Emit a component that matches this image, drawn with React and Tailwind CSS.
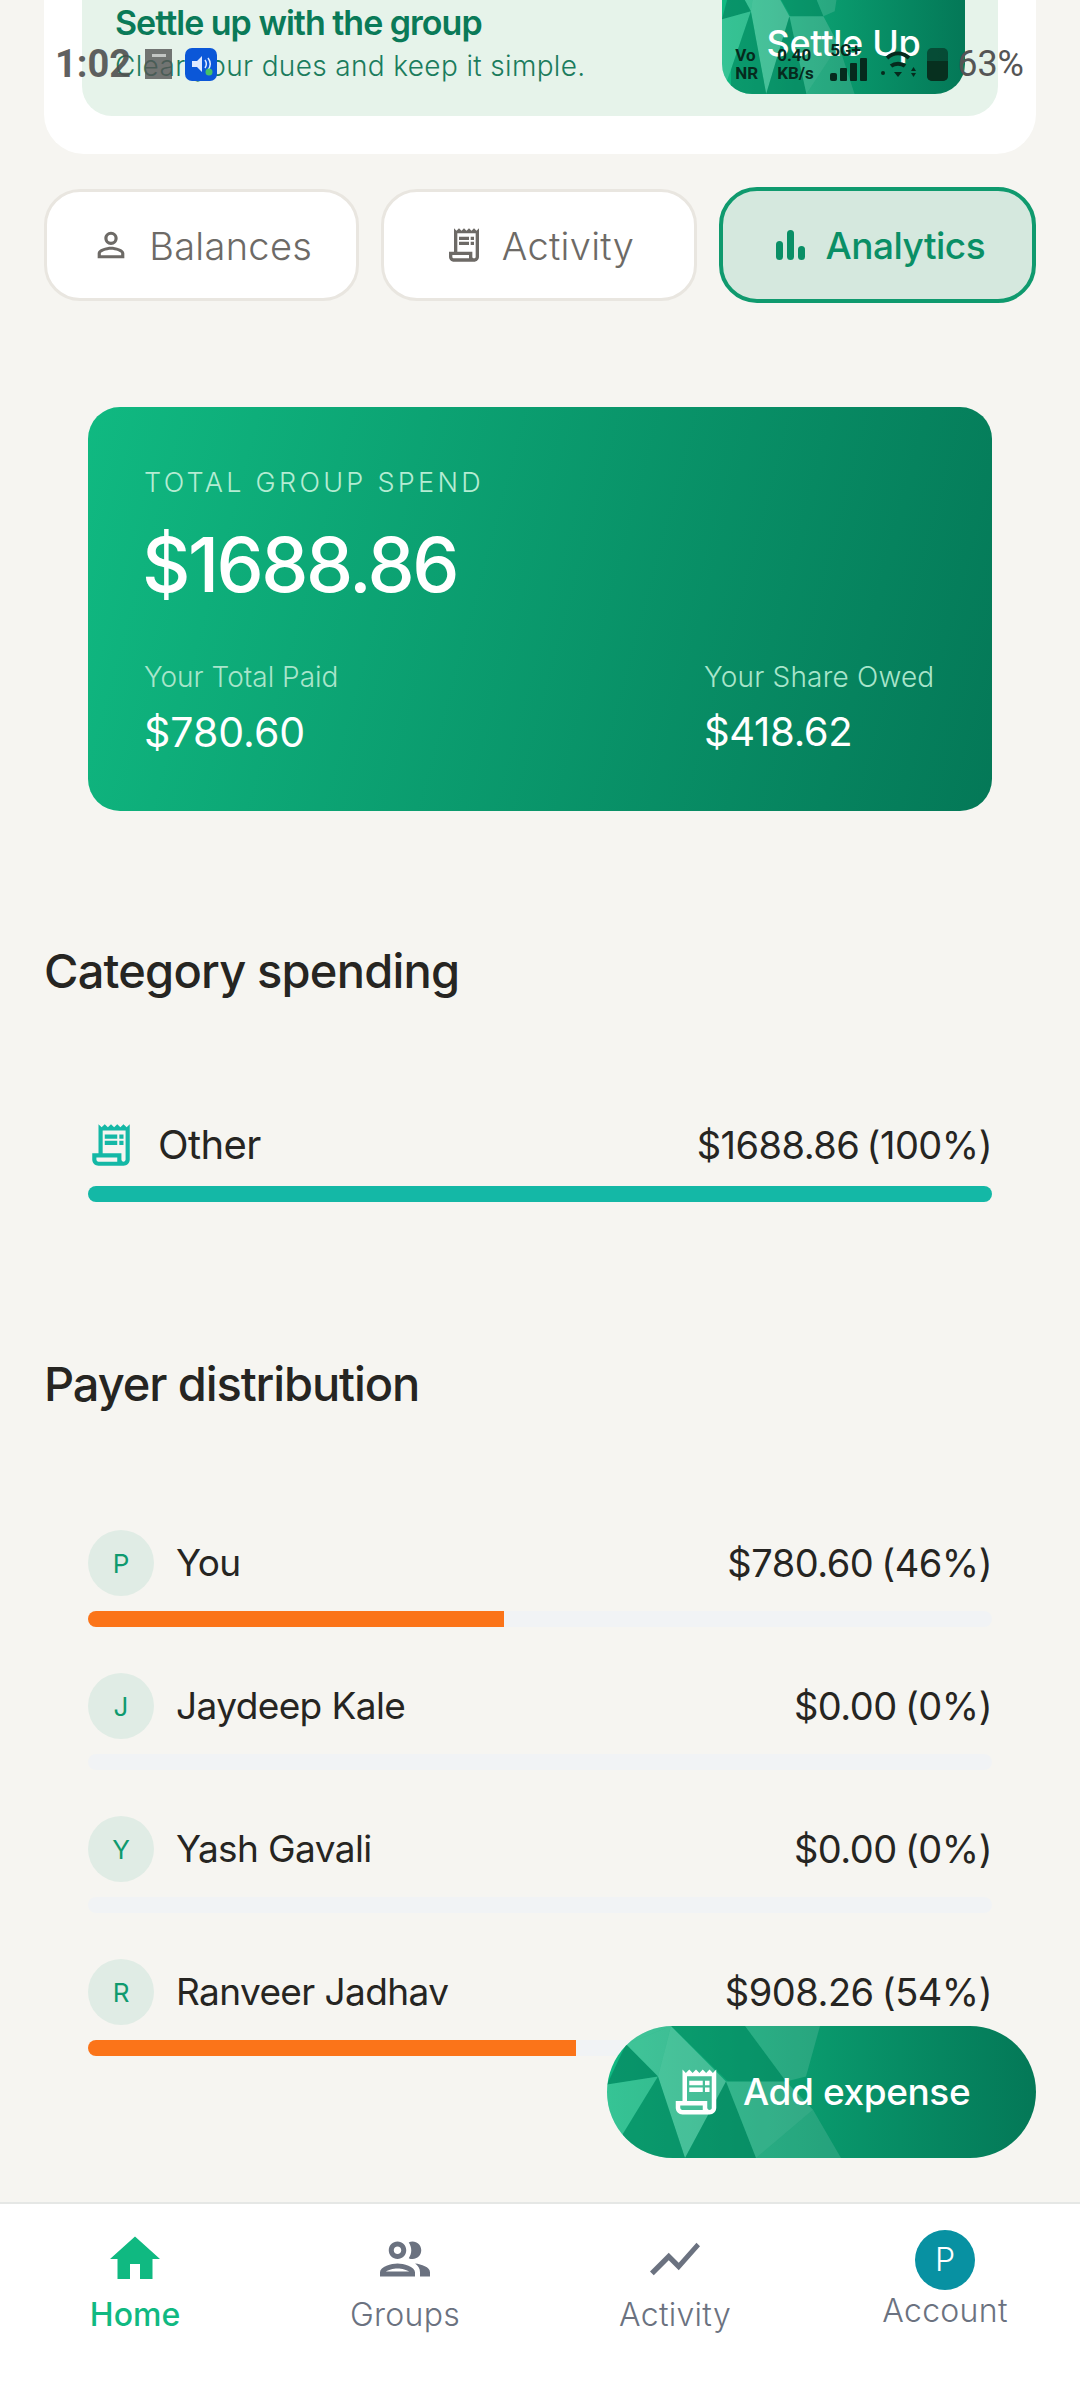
import { MdHome, MdOutlineGroup, MdOutlineReceiptLong, MdPersonOutline, MdShowChart } from 'react-icons/md';

const payers = [
    { initial: 'P', name: 'You', amount: '$780.60 (46%)', percent: 46 },
    { initial: 'J', name: 'Jaydeep Kale', amount: '$0.00 (0%)', percent: 0 },
    { initial: 'Y', name: 'Yash Gavali', amount: '$0.00 (0%)', percent: 0 },
    { initial: 'R', name: 'Ranveer Jadhav', amount: '$908.26 (54%)', percent: 54 },
];

function Facets() {
    return (
        <svg className="absolute inset-0 w-full h-full" viewBox="0 0 429 131" preserveAspectRatio="none">
            <polygon points="19,18 64,0 0,0" fill="#ffffff" opacity="0.2" />
            <polygon points="19,18 64,0 51,50" fill="#ffffff" opacity="0.2" />
            <polygon points="64,0 51,50 78,131 119,55" fill="#ffffff" opacity="0.24" />
            <polygon points="0,58 19,18 51,50" fill="#047857" opacity="0.55" />
            <polygon points="0,58 51,50 16,107 0,131" fill="#ffffff" opacity="0.16" />
            <polygon points="16,107 51,50 78,131 16,131" fill="#047857" opacity="0.45" />
            <polygon points="78,131 119,55 149,131" fill="#047857" opacity="0.45" />
            <polygon points="64,0 138,0 179,55 121,55" fill="#047857" opacity="0.35" />
            <polygon points="119,55 179,55 206,83 149,131" fill="#ffffff" opacity="0.17" />
            <polygon points="149,131 206,83 234,131" fill="#ffffff" opacity="0.12" />
            <polygon points="138,0 213,0 199,50 179,55" fill="#ffffff" opacity="0.13" />
        </svg>
    );
}

function StatusBar() {
    return (
        <div className="absolute top-[44px] left-[55px] w-[969px] h-[40px] flex items-center justify-between text-[#4f4f4f] font-['Roboto',sans-serif]">
            <div className="flex items-center">
                <span className="text-[38px] font-bold leading-none w-[90px] opacity-90">1:02</span>
                <span className="w-[27px] h-[30px] bg-[#555555] opacity-80 flex justify-center pt-[5px]">
                    <span className="w-[14px] h-[3px] bg-[#bbbbbb]" />
                </span>
                <span className="ml-[13px] w-[32px] h-[33px] rounded-[7px] bg-[#0b57d8] flex items-center justify-center">
                    <svg width="24" height="24" viewBox="0 0 24 24" fill="none">
                        <polygon points="3,9 8,9 13,4 13,20 8,15 3,15" fill="#dfe9ff" />
                        <path d="M16 8c2 3 2 5 0 8M19 6c3 4 3 8 0 12" stroke="#dfe9ff" strokeWidth="1.5" />
                        <circle cx="20" cy="20" r="3.5" fill="#46c267" />
                    </svg>
                </span>
            </div>
            <div className="flex items-center text-[#062a1d]">
                <span className="flex flex-col text-[17px] font-bold leading-[18px] w-[42px]">
                    <span>Vo</span>
                    <span>NR</span>
                </span>
                <span className="flex flex-col text-[17px] font-bold leading-[18px] w-[53px]">
                    <span>0.40</span>
                    <span>KB/s</span>
                </span>
                <span className="relative w-[49px] h-[34px] flex items-end gap-[3px]">
                    <span className="absolute -top-[5px] left-0 text-[17px] font-bold leading-none">5G+</span>
                    <span className="w-[7px] h-[8px] rounded-[2px] bg-[#062a1d]" />
                    <span className="w-[7px] h-[13px] rounded-[1px] bg-[#062a1d]" />
                    <span className="w-[7px] h-[18px] rounded-[1px] bg-[#062a1d]" />
                    <span className="w-[7px] h-[23px] rounded-[1px] bg-[#062a1d]" />
                </span>
                <svg width="38" height="30" viewBox="0 0 38 30" fill="none" stroke="#062a1d" strokeWidth="4" className="mr-[10px]">
                    <path d="M8 9c7-6 15-6 22 0" />
                    <path d="M12 17c4-3 10-3 14 0" />
                    <polygon points="15,23 23,23 19,28" fill="#062a1d" stroke="none" />
                    <polygon points="32,22 37,22 34.5,18" fill="#062a1d" stroke="none" />
                    <polygon points="32,24 37,24 34.5,28" fill="#062a1d" stroke="none" />
                    <circle cx="4" cy="24" r="2" fill="#062a1d" stroke="none" />
                </svg>
                <span className="w-[21px] h-[33px] rounded-[5px] bg-[#062a1d]/60 flex items-end overflow-hidden">
                    <span className="w-full h-[20px] bg-[#07301f]" />
                </span>
                <span className="ml-[9px] text-[36px] leading-none text-[#555555]">63%</span>
            </div>
        </div>
    );
}

function Tab({ icon, label, active }) {
    return (
        <div className={active
            ? 'flex-1 h-[116px] -my-[2px] rounded-[38px] border-[4px] border-[#0f9a6e] bg-[#d5e8de] flex items-center justify-center gap-[16px] text-[#0a8f66]'
            : 'flex-1 h-[112px] rounded-[36px] border-[3px] border-[#e9e6e0] bg-white flex items-center justify-center gap-[18px] text-[#6d6a66]'}
        >
            {icon}
            <span className={active ? 'mt-[2px] text-[37px] font-medium tracking-[-0.5px]' : 'mt-[2px] text-[38px] font-light tracking-[0.3px]'}>{label}</span>
        </div>
    );
}

function PayerRow({ payer }) {
    return (
        <div className="h-[143px]">
            <div className="flex items-center h-[66px]">
                <div className="w-[66px] h-[66px] rounded-full bg-[#e0ece5] flex items-center justify-center text-[26px] text-[#0f9a6e]">
                    {payer.initial}
                </div>
                <span className="ml-[22px] flex-1 text-[37px] tracking-[-0.6px] text-[#262522]">{payer.name}</span>
                <span className="text-[38px] tracking-[-0.5px] [word-spacing:-2px] text-[#262522]">{payer.amount}</span>
            </div>
            <div className="mt-[15px] h-[16px] rounded-full bg-[#f1f3f5] overflow-hidden">
                <div className="h-full bg-[#fb7419]" style={{ width: `${payer.percent}%` }} />
            </div>
        </div>
    );
}

function NavItem({ icon, label, active }) {
    return (
        <div className={active ? 'flex-1 flex flex-col items-center text-[#10b981]' : 'flex-1 flex flex-col items-center text-[#6b7280]'}>
            <div className="h-[58px] flex items-center justify-center">{icon}</div>
            <span className={active ? 'mt-[9px] text-[32px] font-medium leading-[36px]' : 'mt-[9px] text-[32px] font-light tracking-[0.3px] leading-[36px]'}>{label}</span>
        </div>
    );
}

export default function App() {
    return (
        <div className="relative w-[1080px] h-[2408px] overflow-hidden flex flex-col bg-[#f6f5f1] font-['Inter',sans-serif]">
            <main className="flex-1 px-[44px]">
                <div className="-mt-[40px] h-[194px] rounded-[40px] bg-white px-[38px]">
                    <div className="h-[156px] rounded-[30px] bg-[#e6f3ea] pl-[33px] pr-[33px] flex justify-between">
                        <div className="pt-[40px]">
                            <div className="text-[34px] leading-[46px] font-semibold tracking-[-1px] text-[#0a7a58]">Settle up with the group</div>
                            <div className="mt-[-2px] text-[28px] leading-[44px] font-light tracking-[0.35px] text-[#1b7c5d]">Clear your dues and keep it simple.</div>
                        </div>
                        <div className="relative w-[243px] h-[134px] rounded-[30px] overflow-hidden bg-gradient-to-r from-[#10b981] to-[#047857] flex items-center justify-center">
                            <Facets />
                            <span className="relative mt-[32px] text-[36px] font-medium tracking-[-0.3px] text-white">Settle Up</span>
                        </div>
                    </div>
                </div>

                <div className="mt-[35px] flex gap-[22px]">
                    <Tab icon={<MdPersonOutline size={40} />} label="Balances" />
                    <Tab icon={<MdOutlineReceiptLong size={40} />} label="Activity" />
                    <Tab
                        active
                        label="Analytics"
                        icon={
                            <svg width="40" height="40" viewBox="0 0 40 40" fill="currentColor">
                                <rect x="6" y="16" width="7" height="19" rx="3.5" />
                                <rect x="17" y="5" width="7" height="30" rx="3.5" />
                                <rect x="28" y="21" width="7" height="14" rx="3.5" />
                            </svg>
                        }
                    />
                </div>

                <section className="mt-[106px] mx-[44px] h-[404px] rounded-[32px] bg-[linear-gradient(105deg,#10b981,#047857)] px-[56px] pt-[56px] text-white">
                    <div className="text-[27px] leading-[40px] font-light tracking-[3.3px] text-[#b5ecd3]">TOTAL GROUP SPEND</div>
                    <div className="mt-[16px] -ml-[2px] text-[75px] leading-[92px] font-medium tracking-[-2.5px]">$1688.86</div>
                    <div className="mt-[46px] flex justify-between">
                        <div>
                            <div className="text-[28px] leading-[40px] font-light text-[#a9e5cb]">Your Total Paid</div>
                            <div className="mt-[11px] text-[41px] leading-[48px] font-normal">$780.60</div>
                        </div>
                        <div className="w-[232px]">
                            <div className="text-[28px] leading-[40px] font-light tracking-[0.2px] text-[#a9e5cb] whitespace-nowrap">Your Share Owed</div>
                            <div className="mt-[11px] text-[40px] leading-[48px] font-normal tracking-[-0.3px]">$418.62</div>
                        </div>
                    </div>
                </section>

                <h2 className="mt-[132px] text-[47px] leading-[56px] font-medium tracking-[-0.8px] text-[#262522]">Category spending</h2>

                <div className="mt-[118px] mx-[44px]">
                    <div className="flex items-center h-[56px]">
                        <MdOutlineReceiptLong size={50} className="text-[#14b8a6] -ml-[2px]" />
                        <span className="ml-[22px] flex-1 text-[40px] tracking-[-0.6px] text-[#262522]">Other</span>
                        <span className="text-[38px] tracking-[-0.5px] [word-spacing:-3px] text-[#262522]">$1688.86 (100%)</span>
                    </div>
                    <div className="mt-[13px] h-[16px] rounded-full bg-[#14b8a6]" />
                </div>

                <h2 className="mt-[154px] text-[47px] leading-[56px] font-medium tracking-[-1.1px] text-[#262522]">Payer distribution</h2>

                <div className="mt-[118px] mx-[44px]">
                    {payers.map((payer) => <PayerRow key={payer.name} payer={payer} />)}
                </div>
            </main>

            <nav className="h-[206px] shrink-0 border-t-2 border-[#e5e7e5] bg-white flex pt-[26px]">
                <NavItem active icon={<MdHome size={60} />} label="Home" />
                <NavItem icon={<MdOutlineGroup size={60} />} label="Groups" />
                <NavItem icon={<MdShowChart size={60} />} label="Activity" />
                <div className="flex-1 flex flex-col items-center text-[#6b7280]">
                    <div className="w-[60px] h-[60px] rounded-full bg-[#0891a2] flex items-center justify-center text-[32px] font-light text-white">P</div>
                    <span className="mt-[3px] text-[32px] font-light tracking-[0.3px] leading-[36px]">Account</span>
                </div>
            </nav>

            <button className="absolute left-[607px] top-[2026px] w-[429px] h-[132px] rounded-full overflow-hidden bg-gradient-to-r from-[#10b981] to-[#047857] flex items-center pl-[62px] gap-[20px] text-white">
                <Facets />
                <MdOutlineReceiptLong size={54} className="relative" />
                <span className="relative text-[37px] font-medium tracking-[-0.4px]">Add expense</span>
            </button>

            <StatusBar />
        </div>
    );
}
